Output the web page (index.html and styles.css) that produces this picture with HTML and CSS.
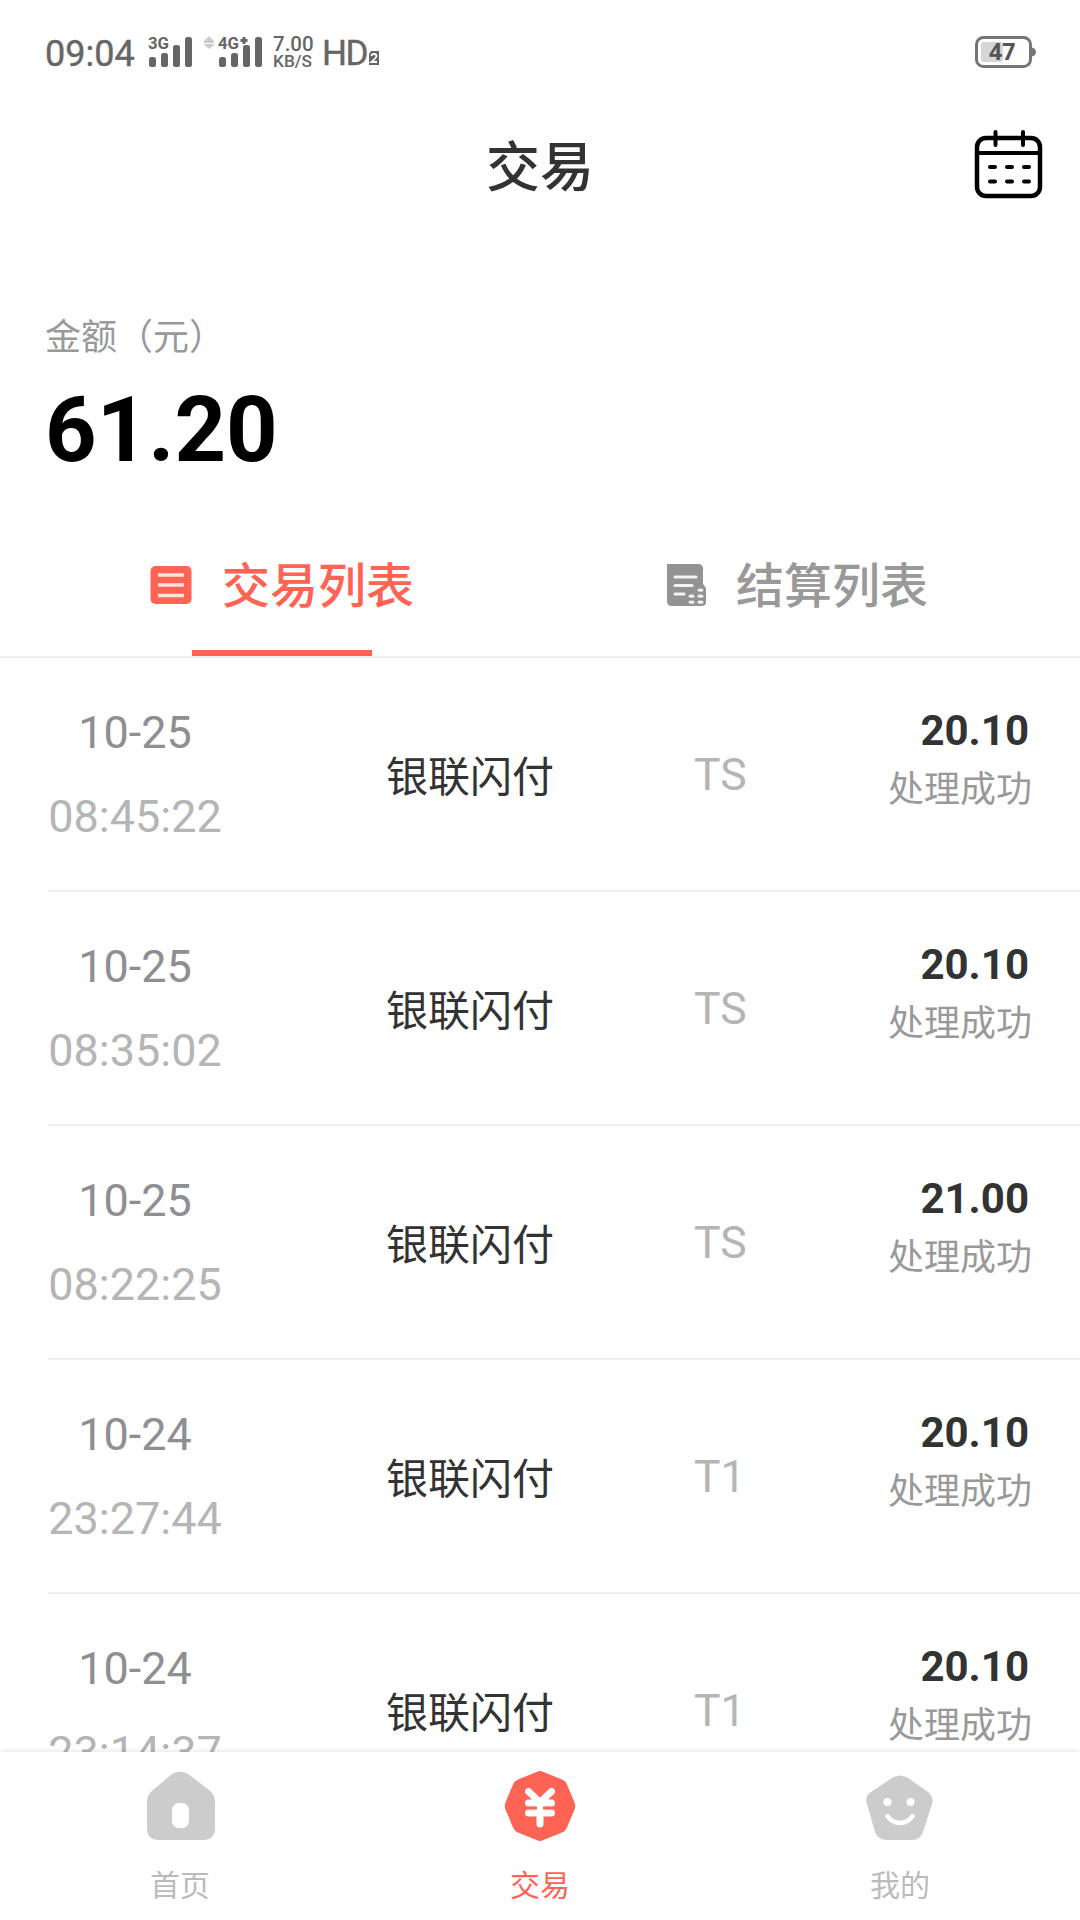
FILE: index.html
```html
<!DOCTYPE html>
<html lang="zh-CN">
<head>
<meta charset="utf-8">
<title>交易</title>
<link rel="stylesheet" href="styles.css">
</head>
<body>
<div class="app">
  <div class="statusbar">
    <span class="clock">09:04</span>
    <svg class="signals" width="120" height="36" viewBox="0 0 120 36">
      <g fill="#666">
        <rect x="1" y="23" width="7" height="10" rx="2.5"/><rect x="13" y="19" width="7" height="14" rx="2.5"/><rect x="25" y="11" width="7" height="22" rx="2.5"/><rect x="37" y="3" width="7" height="30" rx="2.5"/>
        <rect x="71" y="23" width="7" height="10" rx="2.5"/><rect x="83" y="19" width="7" height="14" rx="2.5"/><rect x="95" y="11" width="7" height="22" rx="2.5"/><rect x="107" y="3" width="7" height="30" rx="2.5"/>
        <path d="M94.500 3h3v2h2v3h-2v2h-3v-2h-2v-3h2z"/>
      </g>
      <g fill="#ccc"><path d="M56 7l5-5 5 5v2H56z"/><path d="M56 10h10v1l-5 4-5-4z"/></g>
      <text class="net" x="0" y="15" textLength="21" lengthAdjust="spacingAndGlyphs">3G</text>
      <text class="net" x="70" y="15" textLength="21" lengthAdjust="spacingAndGlyphs">4G</text>
    </svg>
    <span class="speed"><span class="speed-value">7.00</span><span class="speed-unit">KB/S</span></span>
    <span class="hd">HD</span>
    <svg class="sim" width="12" height="16" viewBox="0 0 12 16"><path d="M3 1h8v14H1V4z" fill="#666"/><path d="M3.500 6q0-2 2.500-2t2.500 2q0 1.500-5 6h5.500" fill="none" stroke="#fff" stroke-width="1.800"/></svg>
    <svg class="battery" width="62" height="34" viewBox="0 0 62 34">
      <rect x="1.500" y="1.500" width="54" height="29" rx="7" fill="#fff" stroke="#757575" stroke-width="3"/>
      <path d="M57 11.500q4 1 4 4.500t-4 4.500z" fill="#757575"/>
      <rect x="6" y="6" width="22" height="20" rx="3" fill="#d6d6d6"/>
      <text class="level" x="14" y="24">47</text>
    </svg>
  </div>

  <header class="header">
    <h1 class="title">交易</h1>
    <svg class="calendar" width="70" height="70" viewBox="0 0 70 70" fill="none" stroke="#000" stroke-linecap="round">
      <rect x="3" y="8" width="63" height="58" rx="9" stroke-width="4.500"/>
      <path d="M3 23h63" stroke-width="4"/>
      <path d="M21.500 2v13M49 2v13" stroke-width="4"/>
      <path d="M16 37h5M33 37h5M50 37h5M16 51.500h5M33 51.500h5M50 51.500h5" stroke-width="4"/>
    </svg>
  </header>

  <section class="summary">
    <div class="summary-label">金额（元）</div>
    <div class="summary-value">61.20</div>
  </section>

  <nav class="tabs">
    <div class="tab tab-active">
      <svg width="42" height="40" viewBox="0 0 42 40"><rect x="0.500" y="1" width="41" height="38" rx="5" fill="#ff6353"/><path d="M8 10h26M8 20h26M8 30.500h26" stroke="#ffe3dc" stroke-width="3.500"/></svg>
      <span>交易列表</span>
    </div>
    <div class="tab tab-settle">
      <svg width="40" height="44" viewBox="0 0 40 44"><path d="M0 1H31Q36 1 36 6V21L39 25V39Q39 43 35 43H5Q0 43 0 38Z" fill="#939393"/><path d="M8 14h21M8 22.500h17M8 31h9" stroke="#f4f4f4" stroke-width="3" stroke-linecap="round"/><path d="M22 32.500q2.500 1.500 5 0M22 38.500q2.500 1.500 5 0M31 26.500q2.500 1.500 5 0M31 32.500q2.500 1.500 5 0M31 38.500q2.500 1.500 5 0" fill="none" stroke="#f4f4f4" stroke-width="3"/></svg>
      <span>结算列表</span>
    </div>
  </nav>

  <main class="list">
    <div class="row"><div class="when"><span class="date">10-25</span><span class="time">08:45:22</span></div><div class="name">银联闪付</div><div class="kind">TS</div><div class="result"><span class="amount">20.10</span><span class="state">处理成功</span></div></div>
    <div class="row"><div class="when"><span class="date">10-25</span><span class="time">08:35:02</span></div><div class="name">银联闪付</div><div class="kind">TS</div><div class="result"><span class="amount">20.10</span><span class="state">处理成功</span></div></div>
    <div class="row"><div class="when"><span class="date">10-25</span><span class="time">08:22:25</span></div><div class="name">银联闪付</div><div class="kind">TS</div><div class="result"><span class="amount">21.00</span><span class="state">处理成功</span></div></div>
    <div class="row"><div class="when"><span class="date">10-24</span><span class="time">23:27:44</span></div><div class="name">银联闪付</div><div class="kind">T1</div><div class="result"><span class="amount">20.10</span><span class="state">处理成功</span></div></div>
    <div class="row"><div class="when"><span class="date">10-24</span><span class="time">23:14:37</span></div><div class="name">银联闪付</div><div class="kind">T1</div><div class="result"><span class="amount">20.10</span><span class="state">处理成功</span></div></div>
  </main>

  <footer class="bottom-nav">
    <div class="nav-item">
      <svg width="72" height="72" viewBox="0 0 72 72"><path d="M28 4Q36 -1 44 4L65 20Q71 25 71 31V58Q71 70 59 70H15Q3 70 3 58V31Q3 25 9 20Z" fill="#ccc"/><rect x="28" y="33" width="17" height="25" rx="7" fill="#fff"/></svg>
      <span>首页</span>
    </div>
    <div class="nav-item nav-active">
      <svg width="72" height="72" viewBox="0 0 72 72"><path d="M32.500 2Q36 .2 39.500 2L58 9.500Q61.500 11 63 14.500L70.500 32.500Q72 36 70.500 39.500L63 57.500Q61.500 61 58 62.500L39.500 70Q36 71.800 32.500 70L14 62.500Q10.500 61 9 57.500L1.500 39.500Q0 36 1.500 32.500L9 14.500Q10.500 11 14 9.500Z" fill="#ff6353"/><path d="M24.500 21.500L36 32.500L47.500 21.500M24.500 33h23M24.500 43h23M36 33v21" fill="none" stroke="#fff" stroke-width="7" stroke-linecap="round"/><path d="M25 37.900h8M39 37.900h8" stroke="#ff6353" stroke-width="2.500"/></svg>
      <span>交易</span>
    </div>
    <div class="nav-item">
      <svg width="72" height="72" viewBox="0 0 72 72"><path d="M28 8Q36 3 44 8L64 22Q70 27 68 34L59 62Q56 70 48 70H23Q14 70 11 62L3 34Q0 27 7 22Z" fill="#ccc"/><circle cx="23.500" cy="32" r="4" fill="#fff"/><circle cx="46.500" cy="32" r="4" fill="#fff"/><path d="M23.500 46Q28 53 36 53T48.500 46" fill="none" stroke="#fff" stroke-width="4.500" stroke-linecap="round"/></svg>
      <span>我的</span>
    </div>
  </footer>
</div>
</body>
</html>
```
FILE: styles.css
```css
* { box-sizing: border-box; }

body {
  margin: 0;
  background: #fff;
  font-family: Roboto, "Noto Sans CJK SC", sans-serif;
}

.app {
  width: 1080px;
  height: 1920px;
  display: flex;
  flex-direction: column;
  overflow: hidden;
}

.statusbar {
  flex: none;
  display: flex;
  align-items: center;
  height: 106px;
  padding: 0 45px;
  color: #666;
}
.clock { width: 103px; padding-top: 2px; font-size: 36px; line-height: 40px; -webkit-text-stroke: 0.4px #666; }
.signals { display: block; margin-top: -2px; }
.net { font: 700 17px Roboto, sans-serif; fill: #666; }
.speed {
  display: flex;
  flex-direction: column;
  width: 49px;
  margin: -1px 0 0 5px;
  font-weight: 500;
  line-height: 17px;
}
.speed-value { font-size: 20.500px; }
.speed-unit { font-size: 17.300px; }
.hd { width: 46px; padding-top: 1px; font-size: 35px; letter-spacing: -1.5px; line-height: 40px; -webkit-text-stroke: 0.4px #666; }
.sim { margin: 9px 0 0; }
.battery { margin: 0 -2px 0 auto; }
.level { font: 700 23px "Noto Sans", sans-serif; fill: #555; }

.header {
  flex: none;
  display: grid;
  grid-template-columns: 1fr auto 1fr;
  align-items: center;
  height: 114px;
  padding: 2px 36px 0;
}
.title {
  grid-column: 2;
  margin: 0;
  font: 500 54px/60px "Noto Sans CJK SC", sans-serif;
  color: #333;
}
.calendar { justify-self: end; margin-top: 2px; }

.summary { flex: none; height: 280px; padding: 89px 45px 0; }
.summary-label {
  font: 400 36px/50px "Noto Sans CJK SC", sans-serif;
  color: #999;
}
.summary-value {
  margin-top: 22px;
  font-size: 90px;
  font-weight: 700;
  line-height: 100px;
  color: #000;
}

.tabs {
  flex: none;
  display: grid;
  grid-template-columns: 192px 180px 1fr;
  height: 158px;
  border-bottom: 2px solid #eee;
  font: 500 48px/60px "Noto Sans CJK SC", sans-serif;
  color: #999;
}
.tab { display: flex; gap: 30px; padding-top: 52px; white-space: nowrap; }
.tab svg { flex: none; margin-top: 13px; }
.tab-active {
  grid-column: 2;
  border-bottom: 6px solid #ff6353;
  color: #ff6353;
}
.tab-active svg { margin-left: -42px; }
.tab-settle { gap: 29px; padding-left: 295px; }
.tab-settle svg { margin-top: 11px; }

.list { flex: none; height: 1094px; padding-left: 48px; overflow: hidden; }
.row {
  display: grid;
  grid-template-columns: 338px 308px 1fr auto;
  align-items: center;
  height: 234px;
  padding-right: 48px;
  border-bottom: 2px solid #eee;
}
.when {
  display: flex;
  flex-direction: column;
  align-items: center;
  width: 174px;
  padding-top: 2px;
  font-size: 45px;
  line-height: 84px;
}
.date { color: #8e8e93; }
.time { color: #b5b5b5; }
.name { font: 400 42px/56px "Noto Sans CJK SC", sans-serif; color: #333; }
.kind { padding-top: 2px; font-size: 44.500px; line-height: 56px; color: #b5b5b5; }
.result {
  display: flex;
  flex-direction: column;
  align-items: flex-end;
  padding-bottom: 31px;
  line-height: 56px;
}
.amount { padding-right: 3px; font-size: 42px; font-weight: 700; color: #333; }
.state { margin-top: -1px; font: 400 36px/56px "Noto Sans CJK SC", sans-serif; color: #999; }

.bottom-nav {
  position: relative;
  flex: none;
  display: grid;
  grid-template-columns: repeat(3, 1fr);
  height: 168px;
  background: #fff;
  box-shadow: 0 -1px 5px rgba(0, 0, 0, 0.1);
}
.nav-item {
  display: flex;
  flex-direction: column;
  align-items: center;
  gap: 21px;
  padding-top: 18px;
  font: 400 30px/40px "Noto Sans CJK SC", sans-serif;
  color: #bbb;
}
.nav-active { color: #ff6353; }
```
